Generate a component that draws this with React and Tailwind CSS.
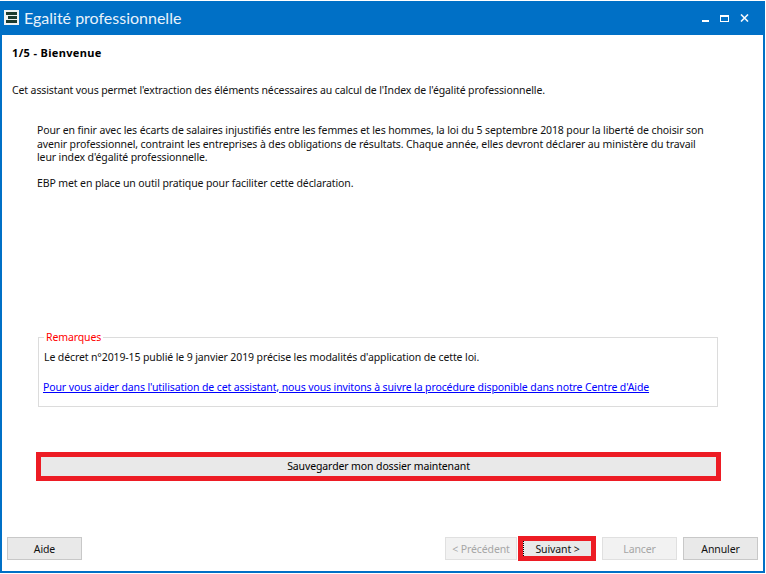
export default function App() {
  return (
    <div className="w-[766px] h-[574px] bg-white pt-px pr-px pb-px font-['Noto_Sans',sans-serif] text-[10.5px] tracking-[-0.115px] text-[#111] overflow-hidden">
      <div className="h-[572px] flex flex-col border-x-2 border-b-2 border-[#0070c6]">
        <div className="h-[34px] -mx-[2px] bg-[#0070c6] flex items-center pl-[4px] pr-[16px] shrink-0">
          <svg width="15" height="15" viewBox="0 0 15 15" className="shrink-0 -mt-[2px]">
            <rect width="15" height="15" fill="#f0f2f2" />
            <rect x="2" y="2" width="11" height="3" fill="#1d3b2f" />
            <rect x="4" y="6" width="9" height="3" fill="#1d3b2f" />
            <rect x="2" y="10" width="11" height="3" fill="#1d3b2f" />
          </svg>
          <span className="ml-[5px] text-[16px] tracking-normal text-[#e8f2fb] font-['Lato',sans-serif]">Egalité professionnelle</span>
          <div className="ml-auto flex items-center gap-[11px]">
            <div className="w-[7px] h-[2px] bg-white mt-[6px]" />
            <div className="w-[9px] h-[7px] border border-white border-t-2" />
            <svg width="9" height="8" viewBox="0 0 9 8"><path d="M1 0.5 L8 7.5 M8 0.5 L1 7.5" stroke="#f4f8fc" strokeWidth="1.6" /></svg>
          </div>
        </div>
        <div className="flex-1 flex flex-col pl-[5px] pr-[5px]">
          <div className="mt-[11px] ml-[5px] font-bold text-[11px] tracking-[0.35px] leading-[14px] text-black">1/5 - Bienvenue</div>
          <div className="mt-[23px] ml-[5px] leading-[14px]">Cet assistant vous permet l'extraction des éléments nécessaires au calcul de l'Index de l'égalité professionnelle.</div>
          <div className="mt-[27px] ml-[30px] w-[680px] leading-[13.5px]">
            Pour en finir avec les écarts de salaires injustifiés entre les femmes et les hommes, la loi du 5 septembre 2018 pour la liberté de choisir son avenir professionnel, contraint les entreprises à des obligations de résultats. Chaque année, elles devront déclarer au ministère du travail leur index d'égalité professionnelle.
          </div>
          <div className="mt-[11px] ml-[30px] leading-[14px]">EBP met en place un outil pratique pour faciliter cette déclaration.</div>
          <fieldset className="mt-[140px] ml-[31px] w-[680px] h-[77px] border border-[#dcdcdc] pl-[5px] shrink-0">
            <legend className="px-[2px] pb-[2px] text-[#ff0000] leading-[14px]">Remarques</legend>
            <div className="mt-[4px] leading-[14px]">Le décret n°2019-15 publié le 9 janvier 2019 précise les modalités d'application de cette loi.</div>
            <a href="#" className="block mt-[16px] -ml-px leading-[14px] text-[#0000ff] underline">Pour vous aider dans l'utilisation de cet assistant, nous vous invitons à suivre la procédure disponible dans notre Centre d'Aide</a>
          </fieldset>
          <button className="mt-[45px] ml-[29px] w-[685px] h-[29px] pt-[2px] border-[5px] border-[#ed1c24] bg-[#e9e9e9] text-center text-black shrink-0">Sauvegarder mon dossier maintenant</button>
          <div className="mt-auto mb-[10px] flex items-center text-[#111]">
            <button className="w-[75px] h-[23px] pt-[2px] border border-[#c8c8c8] bg-[#e9e9e9]">Aide</button>
            <button className="ml-auto w-[72px] h-[23px] pt-[2px] border border-[#e0e0e0] bg-[#f2f2f2] text-[#a6a6a6]">&lt; Précédent</button>
            <button className="ml-px w-[78px] h-[25px] border-[5px] border-[#ed1c24] bg-[#e9e9e9]">
              <span className="flex h-full pt-[2px] items-center justify-center border-l border-dotted border-black">Suivant &gt;</span>
            </button>
            <button className="ml-[6px] w-[75px] h-[23px] pt-[2px] border border-[#e0e0e0] bg-[#f2f2f2] text-[#a6a6a6]">Lancer</button>
            <button className="ml-[6px] w-[75px] h-[23px] pt-[2px] border border-[#c8c8c8] bg-[#e9e9e9]">Annuler</button>
          </div>
        </div>
      </div>
    </div>
  );
}
